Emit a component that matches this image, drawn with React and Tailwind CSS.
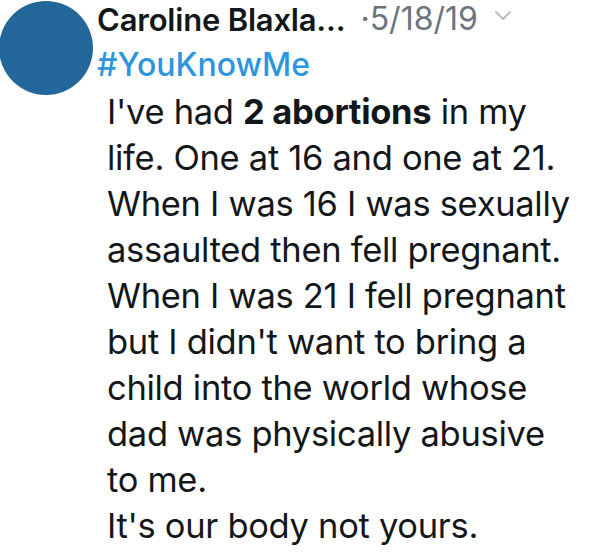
import React from 'react'

const lines = [
  <>I've had <span className="font-bold">2 abortions</span> in my</>,
  'life. One at 16 and one at 21.',
  'When I was 16 I was sexually',
  'assaulted then fell pregnant.',
  'When I was 21 I fell pregnant',
  "but I didn't want to bring a",
  'child into the world whose',
  'dad was physically abusive',
  'to me.',
  "It's our body not yours.",
]

export default function App() {
  return (
    <div className="w-[592px] h-[556px] overflow-hidden bg-white flex font-['Inter',sans-serif]">
      {/* Avatar */}
      <div className="shrink-0 w-[94px] h-[94px] -ml-px mt-px rounded-full bg-[#23679a]" />

      <div className="flex flex-col ml-[4px]">
        {/* Header */}
        <div className="flex items-center h-[38px] leading-none">
          <span className="text-[31px] font-semibold text-[#14171a] tracking-[-0.2px]">Caroline Blaxla...</span>
          <span className="ml-[15px] text-[32px] text-[#69757f]">·5/18/19</span>
          <svg className="ml-[16px] mt-[-6px]" width="18" height="12" viewBox="0 0 18 12" fill="none">
            <path d="M2 2l7 7 7-7" stroke="#b4bcc3" strokeWidth="1.8" strokeLinecap="round" strokeLinejoin="round" />
          </svg>
        </div>

        {/* Hashtag */}
        <div className="mt-[8px] text-[32px] leading-[38px] font-medium text-[#2d95dc]">#YouKnowMe</div>

        {/* Body */}
        <div className="pl-[10px] mt-[5px] text-[34.5px] leading-[46px] text-[#14171a] tracking-[-0.3px]">
          {lines.map((line, i) => (
            <div key={i} className="whitespace-nowrap">{line}</div>
          ))}
        </div>
      </div>
    </div>
  )
}
